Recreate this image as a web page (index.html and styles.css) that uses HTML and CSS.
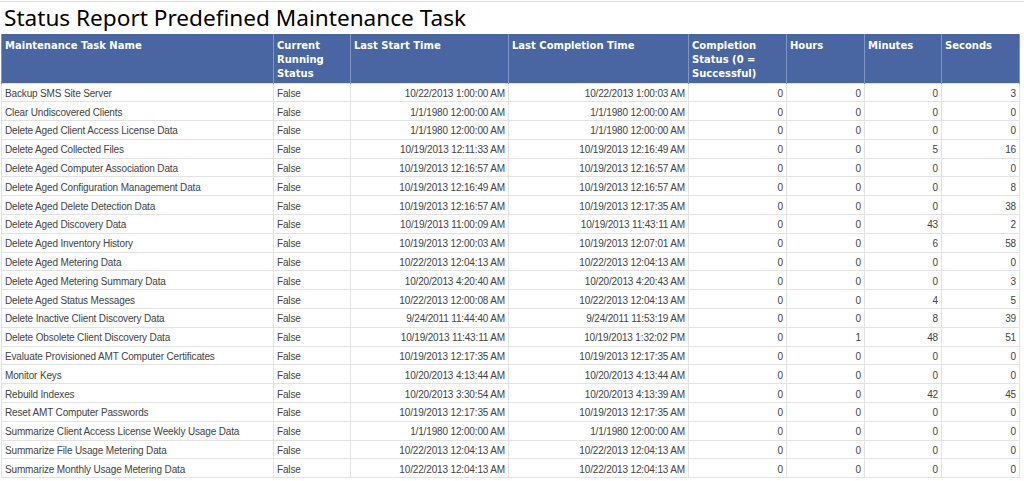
FILE: index.html
```html
<!DOCTYPE html>
<html>
<head>
<meta charset="utf-8">
<link rel="stylesheet" href="styles.css">
</head>
<body>
<div class="topline"></div>
<h1 class="title">Status Report Predefined Maintenance Task</h1>
<table class="report">
<colgroup>
<col class="c1"><col class="c2"><col class="c3"><col class="c4"><col class="c5"><col class="c6"><col class="c7"><col class="c8">
</colgroup>
<thead>
<tr>
<th>Maintenance Task Name</th>
<th>Current Running Status</th>
<th>Last Start Time</th>
<th>Last Completion Time</th>
<th>Completion Status (0 = Successful)</th>
<th>Hours</th>
<th>Minutes</th>
<th>Seconds</th>
</tr>
</thead>
<tbody>
<tr><td>Backup SMS Site Server</td><td>False</td><td class="r">10/22/2013 1:00:00 AM</td><td class="r">10/22/2013 1:00:03 AM</td><td class="r">0</td><td class="r">0</td><td class="r">0</td><td class="r">3</td></tr>
<tr><td>Clear Undiscovered Clients</td><td>False</td><td class="r">1/1/1980 12:00:00 AM</td><td class="r">1/1/1980 12:00:00 AM</td><td class="r">0</td><td class="r">0</td><td class="r">0</td><td class="r">0</td></tr>
<tr><td>Delete Aged Client Access License Data</td><td>False</td><td class="r">1/1/1980 12:00:00 AM</td><td class="r">1/1/1980 12:00:00 AM</td><td class="r">0</td><td class="r">0</td><td class="r">0</td><td class="r">0</td></tr>
<tr><td>Delete Aged Collected Files</td><td>False</td><td class="r">10/19/2013 12:11:33 AM</td><td class="r">10/19/2013 12:16:49 AM</td><td class="r">0</td><td class="r">0</td><td class="r">5</td><td class="r">16</td></tr>
<tr><td>Delete Aged Computer Association Data</td><td>False</td><td class="r">10/19/2013 12:16:57 AM</td><td class="r">10/19/2013 12:16:57 AM</td><td class="r">0</td><td class="r">0</td><td class="r">0</td><td class="r">0</td></tr>
<tr><td>Delete Aged Configuration Management Data</td><td>False</td><td class="r">10/19/2013 12:16:49 AM</td><td class="r">10/19/2013 12:16:57 AM</td><td class="r">0</td><td class="r">0</td><td class="r">0</td><td class="r">8</td></tr>
<tr><td>Delete Aged Delete Detection Data</td><td>False</td><td class="r">10/19/2013 12:16:57 AM</td><td class="r">10/19/2013 12:17:35 AM</td><td class="r">0</td><td class="r">0</td><td class="r">0</td><td class="r">38</td></tr>
<tr><td>Delete Aged Discovery Data</td><td>False</td><td class="r">10/19/2013 11:00:09 AM</td><td class="r">10/19/2013 11:43:11 AM</td><td class="r">0</td><td class="r">0</td><td class="r">43</td><td class="r">2</td></tr>
<tr><td>Delete Aged Inventory History</td><td>False</td><td class="r">10/19/2013 12:00:03 AM</td><td class="r">10/19/2013 12:07:01 AM</td><td class="r">0</td><td class="r">0</td><td class="r">6</td><td class="r">58</td></tr>
<tr><td>Delete Aged Metering Data</td><td>False</td><td class="r">10/22/2013 12:04:13 AM</td><td class="r">10/22/2013 12:04:13 AM</td><td class="r">0</td><td class="r">0</td><td class="r">0</td><td class="r">0</td></tr>
<tr><td>Delete Aged Metering Summary Data</td><td>False</td><td class="r">10/20/2013 4:20:40 AM</td><td class="r">10/20/2013 4:20:43 AM</td><td class="r">0</td><td class="r">0</td><td class="r">0</td><td class="r">3</td></tr>
<tr><td>Delete Aged Status Messages</td><td>False</td><td class="r">10/22/2013 12:00:08 AM</td><td class="r">10/22/2013 12:04:13 AM</td><td class="r">0</td><td class="r">0</td><td class="r">4</td><td class="r">5</td></tr>
<tr><td>Delete Inactive Client Discovery Data</td><td>False</td><td class="r">9/24/2011 11:44:40 AM</td><td class="r">9/24/2011 11:53:19 AM</td><td class="r">0</td><td class="r">0</td><td class="r">8</td><td class="r">39</td></tr>
<tr><td>Delete Obsolete Client Discovery Data</td><td>False</td><td class="r">10/19/2013 11:43:11 AM</td><td class="r">10/19/2013 1:32:02 PM</td><td class="r">0</td><td class="r">1</td><td class="r">48</td><td class="r">51</td></tr>
<tr><td>Evaluate Provisioned AMT Computer Certificates</td><td>False</td><td class="r">10/19/2013 12:17:35 AM</td><td class="r">10/19/2013 12:17:35 AM</td><td class="r">0</td><td class="r">0</td><td class="r">0</td><td class="r">0</td></tr>
<tr><td>Monitor Keys</td><td>False</td><td class="r">10/20/2013 4:13:44 AM</td><td class="r">10/20/2013 4:13:44 AM</td><td class="r">0</td><td class="r">0</td><td class="r">0</td><td class="r">0</td></tr>
<tr><td>Rebuild Indexes</td><td>False</td><td class="r">10/20/2013 3:30:54 AM</td><td class="r">10/20/2013 4:13:39 AM</td><td class="r">0</td><td class="r">0</td><td class="r">42</td><td class="r">45</td></tr>
<tr><td>Reset AMT Computer Passwords</td><td>False</td><td class="r">10/19/2013 12:17:35 AM</td><td class="r">10/19/2013 12:17:35 AM</td><td class="r">0</td><td class="r">0</td><td class="r">0</td><td class="r">0</td></tr>
<tr><td>Summarize Client Access License Weekly Usage Data</td><td>False</td><td class="r">1/1/1980 12:00:00 AM</td><td class="r">1/1/1980 12:00:00 AM</td><td class="r">0</td><td class="r">0</td><td class="r">0</td><td class="r">0</td></tr>
<tr><td>Summarize File Usage Metering Data</td><td>False</td><td class="r">10/22/2013 12:04:13 AM</td><td class="r">10/22/2013 12:04:13 AM</td><td class="r">0</td><td class="r">0</td><td class="r">0</td><td class="r">0</td></tr>
<tr><td>Summarize Monthly Usage Metering Data</td><td>False</td><td class="r">10/22/2013 12:04:13 AM</td><td class="r">10/22/2013 12:04:13 AM</td><td class="r">0</td><td class="r">0</td><td class="r">0</td><td class="r">0</td></tr>
</tbody>
</table>
</body>
</html>
```
FILE: styles.css
```css
html, body {
  margin: 0;
  padding: 0;
  background: #ffffff;
}
body {
  padding-top: 1px;
  font-family: "Liberation Sans", Arial, sans-serif;
  overflow: hidden;
}
.topline {
  height: 1px;
  background: #d9dce0;
}
.title {
  margin: 0;
  padding-left: 4px;
  height: 32px;
  line-height: 32px;
  font-family: "Noto Sans", "Open Sans", sans-serif;
  font-weight: normal;
  font-size: 22.6px;
  color: #000;
}
.report {
  border-collapse: collapse;
  table-layout: fixed;
  width: 1018px;
  margin-left: 1px;
  font-size: 10px;
}
.c1 { width: 272px; }
.c2 { width: 77px; }
.c3 { width: 158px; }
.c4 { width: 180px; }
.c5 { width: 98px; }
.c6 { width: 78px; }
.c7 { width: 77px; }
.c8 { width: 78px; }
.report th {
  background: #4a66a2;
  color: #ffffff;
  font-family: "DejaVu Sans", Verdana, sans-serif;
  font-weight: bold;
  font-size: 10px;
  text-align: left;
  vertical-align: top;
  height: 49px;
  padding: 5px 3px 0 3px;
  box-sizing: border-box;
  line-height: 14px;
  border-left: 1px solid #7f95c4;
  border-right: 1px solid #7f95c4;
}
.report td {
  height: 18.8px;
  box-sizing: border-box;
  padding: 2px 3px 0 3px;
  color: #444444;
  line-height: 15px;
  letter-spacing: -0.15px;
  white-space: nowrap;
  overflow: hidden;
  border: 1px solid #e3e3e3;
}
.report td.r {
  text-align: right;
}
```
